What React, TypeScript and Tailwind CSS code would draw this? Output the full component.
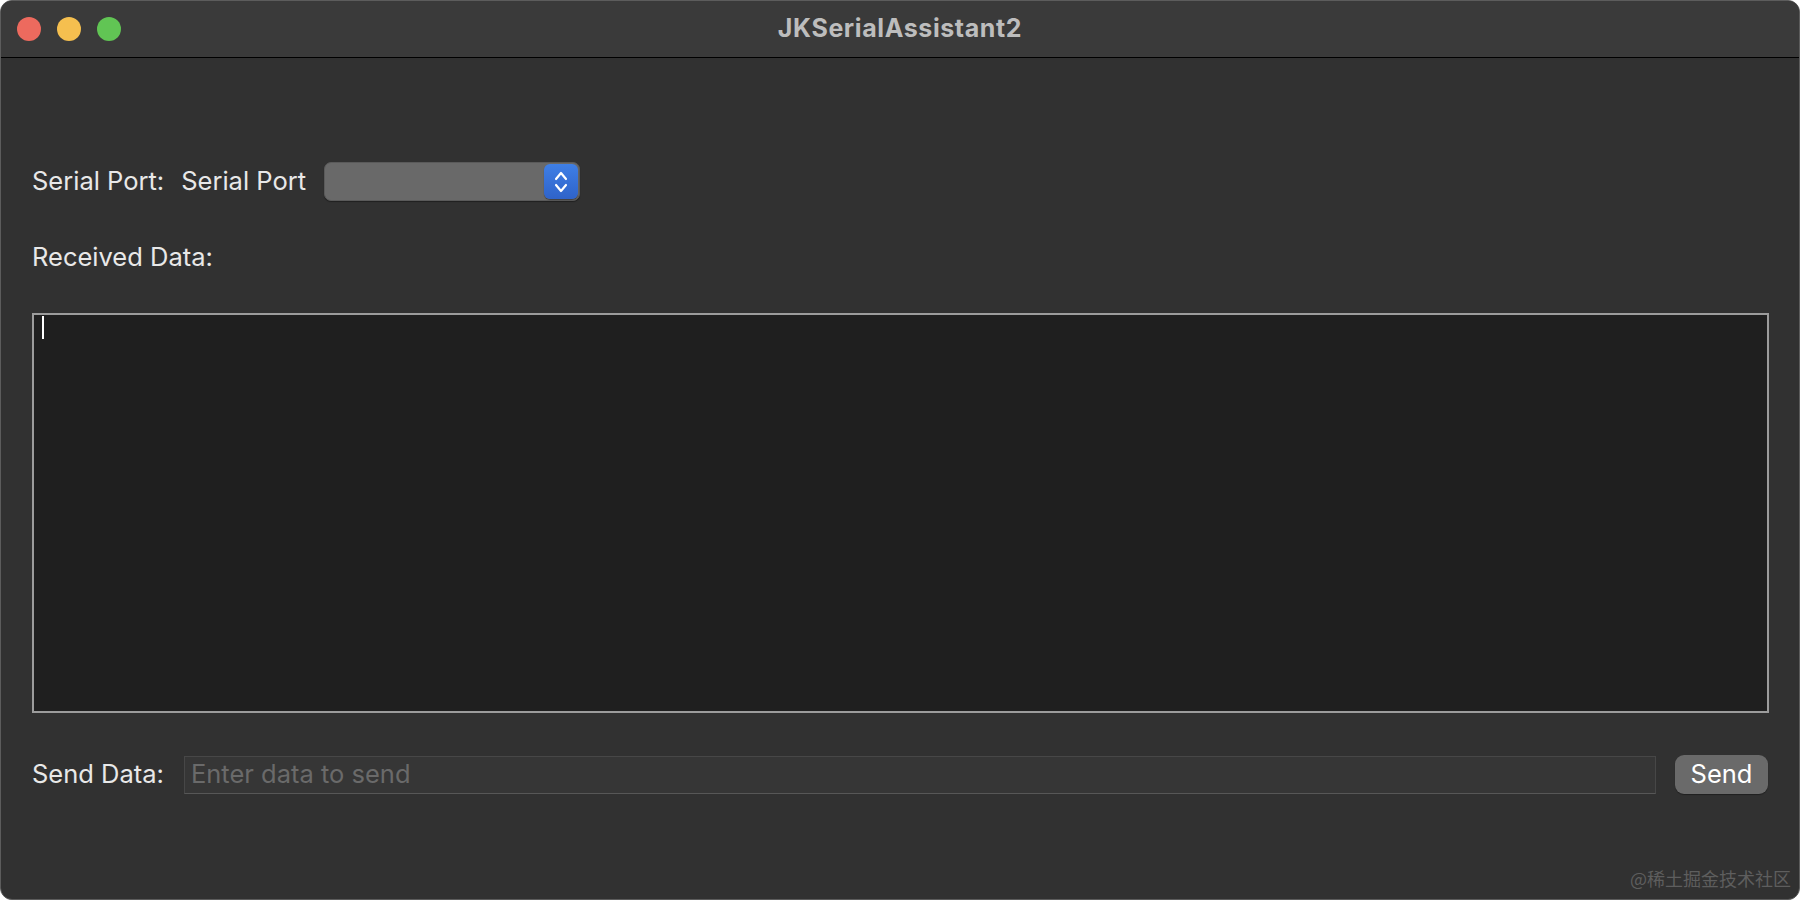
import React from "react";

const font = { fontFamily: "Inter, 'Noto Sans', 'Liberation Sans', sans-serif" };

const Stepper = () => (
  <div className="flex h-[35px] w-[34px] items-center justify-center rounded-[6px] bg-gradient-to-b from-[#3f7fe6] to-[#2f63c9] shadow-[0_1px_1px_rgba(0,0,0,0.4)]">
    <svg width="16" height="28" viewBox="0 0 16 28" fill="none">
      <path d="M3 11 L8 5 L13 11" stroke="white" strokeWidth="2.2" strokeLinecap="round" strokeLinejoin="round" />
      <path d="M3 17 L8 23 L13 17" stroke="white" strokeWidth="2.2" strokeLinecap="round" strokeLinejoin="round" />
    </svg>
  </div>
);

const App = () => {
  return (
    <div className="h-[900px] w-[1800px] bg-white" style={font}>
      <div className="flex h-[900px] w-[1800px] flex-col overflow-hidden rounded-[12px] border border-[#5c5c5c] bg-[#313131]">
        {/* title bar */}
        <div className="relative flex h-[57px] shrink-0 items-center border-b border-black bg-[#3a3a3a]">
          <div className="flex items-center gap-x-[16px] pl-[16px]">
            <span className="h-[24px] w-[24px] rounded-full bg-[#ed6a5e]" />
            <span className="h-[24px] w-[24px] rounded-full bg-[#f5bf4f]" />
            <span className="h-[24px] w-[24px] rounded-full bg-[#61c554]" />
          </div>
          <p className="absolute left-0 right-0 top-[9px] text-center text-[25px] font-bold tracking-[0.6px] text-[#bdbdbd]">
            JKSerialAssistant2
          </p>
        </div>

        <div className="flex flex-1 flex-col px-[31px] pt-[104px]">
          {/* serial port row */}
          <div className="flex h-[39px] items-center text-[25.5px] text-[#e8e8e8]">
            <span>Serial Port:</span>
            <span className="ml-[17px]">Serial Port</span>
            <div className="ml-[18px] flex h-[39px] w-[256px] items-center justify-end rounded-[7px] border border-[#5a5a5a] bg-[#696969] pr-[1px] shadow-[0_1px_1px_rgba(0,0,0,0.35)]">
              <Stepper />
            </div>
          </div>

          <p className="mt-[41px] h-[30px] text-[25.5px] leading-[30px] text-[#e8e8e8]">Received Data:</p>

          {/* received box */}
          <div className="mt-[41px] h-[400px] w-[1737px] border-2 border-[#9c9c9c] bg-[#1f1f1f] pl-[8px] pt-[1px]">
            <div className="h-[23px] w-[2px] bg-white" />
          </div>

          {/* send row */}
          <div className="mt-[42px] flex h-[39px] items-center text-[25.5px]">
            <span className="text-[#e8e8e8]">Send Data:</span>
            <div className="ml-[20px] flex h-[38px] flex-1 items-center border border-[#474747] border-b-[#575757] bg-[#363636] pl-[6px] text-[#6a6a6a]">
              Enter data to send
            </div>
            <button className="ml-[19px] h-[39px] w-[93px] rounded-[9px] bg-[#6a6a6a] text-[25.5px] text-white shadow-[0_1px_1px_rgba(0,0,0,0.35)]">
              Send
            </button>
          </div>

          <div className="-mr-[23px] flex flex-1 items-end justify-end pb-[7px]">
            <span
              className="text-[18px] text-[#5e5e5e]"
              style={{ fontFamily: "'Noto Sans CJK SC', 'Liberation Sans', sans-serif" }}
            >
              @稀土掘金技术社区
            </span>
          </div>
        </div>
      </div>
    </div>
  );
};

export default App;
